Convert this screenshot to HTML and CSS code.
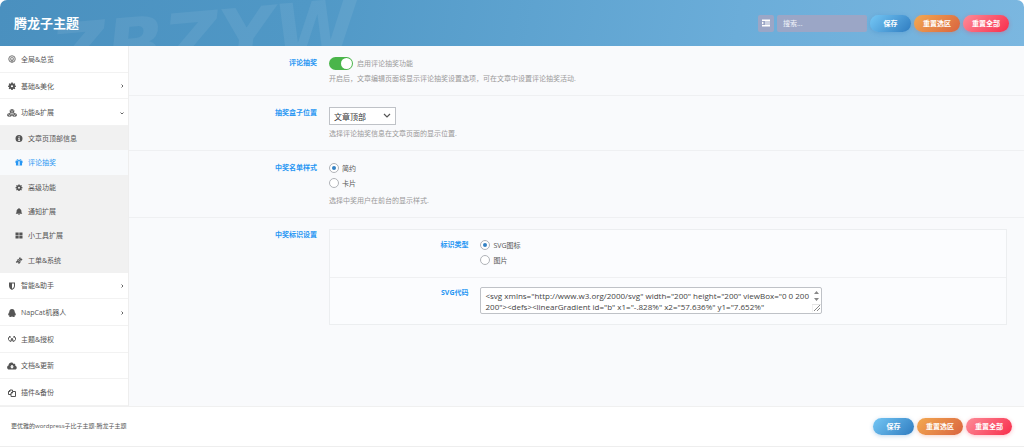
FILE: index.html
```html
<!DOCTYPE html>
<html lang="zh-CN">
<head>
<meta charset="utf-8">
<meta name="viewport" content="width=device-width, initial-scale=1">
<title>腾龙子主题</title>
<link rel="stylesheet" href="styles.css">
</head>
<body>
<header class="header">
  <span class="watermark" aria-hidden="true">ZBZYW</span>
  <h1 class="title">腾龙子主题</h1>
  <div class="tools">
    <button class="expand" type="button" aria-label="展开全部"><svg viewBox="0 0 16 16"><path d="M0 1h16v3H0zM6 5h10v2H6zM6 9h10v2H6zM0 12h16v3H0zM0 5l4 3-4 3z"/></svg></button>
    <input class="search" type="text" placeholder="搜索..." aria-label="搜索">
    <div class="actions">
      <button class="btn save" type="button">保存</button>
      <button class="btn reset" type="button">重置选区</button>
      <button class="btn reset-all" type="button">重置全部</button>
    </div>
  </div>
</header>
<div class="body">
  <nav class="sidebar">
    <a class="item" href="#"><svg class="icon soft" viewBox="0 0 16 16"><circle cx="8" cy="8" r="6.5" fill="none" stroke="currentColor" stroke-width="2"/><circle cx="8" cy="8" r="3.5" fill="none" stroke="currentColor" stroke-width="1.5"/><path d="M7 7h2v8H7z"/></svg>全局&amp;总览</a>
    <a class="item" href="#"><svg class="icon" viewBox="0 0 16 16"><path fill-rule="evenodd" d="M6.500 1h3l.4 2 1.300.500 1.700-1.100 1.700 1.700-1.100 1.700.500 1.300 2 .400v2l-2 .400-.500 1.300 1.100 1.700-1.700 1.700-1.700-1.100-1.300.500-.400 2h-3l-.400-2-1.300-.500-1.700 1.100-1.700-1.700 1.100-1.700-.500-1.300-2-.400v-2l2-.400.500-1.300-1.100-1.700 1.700-1.700 1.700 1.100 1.300-.500zM8 6.300a2.200 2.200 0 1 0 0 4.400 2.200 2.200 0 0 0 0-4.400z"/></svg>基础&amp;美化<svg class="chevron" viewBox="0 0 8 8"><path d="M3 1l3 3-3 3"/></svg></a>
    <a class="item" href="#"><svg class="icon wide" viewBox="0 0 20 16"><path d="M10 0l4.500 2v5L10 9 5.500 7V2zM5 8l4.500 2v4L5 16 .500 14v-4zM15 8l4.500 2v4L15 16l-4.500-2v-4z"/><path class="cut" d="M6.500 3L10 4.500 13.500 3M10 4.500V8M1.500 10.800L5 12.300l3.500-1.500M5 12.300v3M11.500 10.800l3.500 1.500 3.500-1.500M15 12.300v3"/></svg>功能&amp;扩展<svg class="chevron" viewBox="0 0 8 8"><path d="M1 3l3 3 3-3"/></svg></a>
    <a class="item sub" href="#"><svg class="icon" viewBox="0 0 16 16"><path fill-rule="evenodd" d="M8 0a8 8 0 1 1 0 16A8 8 0 0 1 8 0zM7 3v2.500h2.500V3zM6 7v1.500h1V12H6v1.500h4.500V12h-1V7z"/></svg>文章页顶部信息</a>
    <a class="item sub active" href="#" aria-current="page"><svg class="icon" viewBox="0 0 16 16"><path fill-rule="evenodd" d="M0 4h3C1 1 5-1 8 3c3-4 7-2 5 1h3v5h-1v6H1V9H0zM4 3.500h3C5 1.500 3.500 2 4 3.500zm5 0h3c.5-1.500-1-2-3 0zM6.500 5v9h3V5z"/></svg>评论抽奖</a>
    <a class="item sub" href="#"><svg class="icon" viewBox="0 0 16 16"><path fill-rule="evenodd" d="M6.500 1h3l.4 2 1.300.500 1.700-1.100 1.700 1.700-1.100 1.700.500 1.300 2 .400v2l-2 .400-.500 1.300 1.100 1.700-1.700 1.700-1.700-1.100-1.300.500-.400 2h-3l-.400-2-1.300-.500-1.700 1.100-1.700-1.700 1.100-1.700-.500-1.300-2-.400v-2l2-.400.500-1.300-1.100-1.700 1.700-1.700 1.700 1.100 1.300-.500zM8 6.300a2.200 2.200 0 1 0 0 4.400 2.200 2.200 0 0 0 0-4.400z"/></svg>高级功能</a>
    <a class="item sub" href="#"><svg class="icon" viewBox="0 0 16 16"><path d="M7 0h2v1.500c3 .5 4.500 3 4.500 5.500 0 3 .5 4.500 2 6H.5c1.500-1.500 2-3 2-6C2.500 4.500 4 2 7 1.500zM6 14h4c0 3-4 3-4 0z"/></svg>通知扩展</a>
    <a class="item sub" href="#"><svg class="icon" viewBox="0 0 16 16"><path d="M0 1h7.300v6.300H0zM8.700 1H16v6.300H8.700zM0 8.700h7.300V15H0zM8.700 8.700H16V15H8.700z"/></svg>小工具扩展</a>
    <a class="item sub" href="#"><svg class="icon" viewBox="0 0 16 16"><path d="M10 0l2 2-.5 2 2.500-.5 2 2-3 3-2 1 1 2-4 4.500-2-2 .5-2L4 12.500l-1 1-2.500-2 3-3 1-1L3 6l4-1z"/><path class="cut" d="M6 9l4-4M8 11l4-4"/></svg>工单&amp;系统</a>
    <a class="item" href="#"><svg class="icon" viewBox="0 0 16 16"><path fill-rule="evenodd" d="M2 1h12v7c0 4-3 6.500-6 8-3-1.500-6-4-6-8zM8 3v10.500c2.500-1.500 4-3 4-5.500V3z"/></svg>智能&amp;助手<svg class="chevron" viewBox="0 0 8 8"><path d="M3 1l3 3-3 3"/></svg></a>
    <a class="item" href="#"><svg class="icon" viewBox="0 0 16 16"><path d="M8 0c4 0 5.500 3 5.500 6.500C15 8 16 11 15.500 13c-.5.500-1-.5-1.500-1 0 1-.5 1.500-1 2 2 2-3 2.500-5 1-2 1.500-7 1-5-1-.5-.5-1-1-1-2-.5.500-1 1.500-1.500 1C0 11 1 8 2.500 6.500 2.500 3 4 0 8 0z"/></svg>NapCat机器人<svg class="chevron" viewBox="0 0 8 8"><path d="M3 1l3 3-3 3"/></svg></a>
    <a class="item" href="#"><svg class="icon line" viewBox="0 0 16 16"><path d="M4 2L1 6v3l3 4 2-1 1-5M12 2l3 4v3l-3 4-2-1-1-5M8 6v7M4 2v4M12 2v4"/></svg>主题&amp;授权</a>
    <a class="item" href="#"><svg class="icon wide" viewBox="0 0 20 16"><path fill-rule="evenodd" d="M5 15C-1 15-1 8 3 7 3 1 11-1 13 4c3-1 4 1 3.500 3.500C21 9 20 15 16 15zM8.500 6v3H6l4 4.500L14 9h-2.500V6z"/></svg>文档&amp;更新</a>
    <a class="item" href="#"><svg class="icon line" viewBox="0 0 16 16"><path d="M6 11H1V5l3-3h5v3M4 2v3H1M6 15V8l3-3h6v10zM9 5v3H6"/></svg>插件&amp;备份</a>
  </nav>
  <main class="content">
    <section class="field">
      <h2 class="label">评论抽奖</h2>
      <div class="control">
        <label class="switch"><input type="checkbox" role="switch" checked>启用评论抽奖功能</label>
        <p class="desc">开启后，文章编辑页面将显示评论抽奖设置选项，可在文章中设置评论抽奖活动.</p>
      </div>
    </section>
    <section class="field">
      <h2 class="label"><label for="position">抽奖盒子位置</label></h2>
      <div class="control">
        <select class="select" id="position"><option>文章顶部</option></select>
        <p class="desc">选择评论抽奖信息在文章页面的显示位置.</p>
      </div>
    </section>
    <section class="field">
      <h2 class="label">中奖名单样式</h2>
      <div class="control">
        <div class="radios">
          <label class="radio"><input type="radio" name="list" checked>简约</label>
          <label class="radio"><input type="radio" name="list">卡片</label>
        </div>
        <p class="desc">选择中奖用户在前台的显示样式.</p>
      </div>
    </section>
    <section class="field">
      <h2 class="label">中奖标识设置</h2>
      <div class="control">
        <div class="group">
          <div class="field">
            <h3 class="label">标识类型</h3>
            <div class="control radios">
              <label class="radio"><input type="radio" name="mark" checked>SVG图标</label>
              <label class="radio"><input type="radio" name="mark">图片</label>
            </div>
          </div>
          <div class="field">
            <h3 class="label"><label for="code">SVG代码</label></h3>
            <div class="control">
              <div class="code">
                <textarea id="code" rows="2">&lt;svg xmlns="http://www.w3.org/2000/svg" width="200" height="200" viewBox="0 0 200 200"&gt;&lt;defs&gt;&lt;linearGradient id="b" x1="-.828%" x2="57.636%" y1="7.652%"</textarea>
                <svg class="scroll" viewBox="0 0 9 24" aria-hidden="true"><path d="M2 6l2.500-3L7 6zM2 10h5l-2.500 3z"/><path class="frame" d="M0 24v-7.500h9"/><path class="grip" d="M2 23l6-6M5 23l3-3"/></svg>
              </div>
            </div>
          </div>
        </div>
      </div>
    </section>
  </main>
</div>
<footer class="footer">
  <p class="credit">更优雅的wordpress子比子主题-腾龙子主题</p>
  <div class="actions">
    <button class="btn save" type="button">保存</button>
    <button class="btn reset" type="button">重置选区</button>
    <button class="btn reset-all" type="button">重置全部</button>
  </div>
</footer>
</body>
</html>
```

FILE: styles.css
```css
* { box-sizing: border-box; }

body {
  margin: 0;
  min-height: 100vh;
  display: flex;
  flex-direction: column;
  background: #fff;
  color: #555;
  font: 7px/11px "Open Sans", "Noto Sans CJK SC", sans-serif;
}

h1, h2, h3, p { margin: 0; }
button, input, select, textarea { font: inherit; }

/* Header */
.header {
  position: relative;
  overflow: hidden;
  display: flex;
  align-items: center;
  justify-content: space-between;
  min-height: 46px;
  padding: 0 15px 0 14px;
  border-radius: 7px 7px 0 0;
  background: linear-gradient(100deg, #4a90bf, #5098c6 30%, #6badd9 72%, #7bb7e0);
}
.watermark {
  position: absolute;
  left: 51px;
  top: 2px;
  color: rgba(255, 255, 255, .07);
  font: italic bold 76px/76px "DejaVu Sans", sans-serif;
  transform: rotate(-5deg);
}
.title {
  position: relative;
  color: #fff;
  font-size: 13px;
  line-height: 20px;
}
.tools, .actions { display: flex; gap: 3px; }
.expand {
  display: grid;
  place-items: center;
  width: 16px;
  padding: 0;
  border: 0;
  border-radius: 2px;
  background: #9ba6c6;
}
.expand svg { width: 8px; height: 8px; fill: #fff; }
.search {
  width: 90px;
  height: 17px;
  padding: 0 6px;
  border: 0;
  border-radius: 2px;
  background: #9ba6c6;
  color: #fff;
}
.search::placeholder { color: #f0f3fa; }
.btn {
  min-width: 41px;
  height: 17px;
  padding: 0 9px;
  border: 0;
  border-radius: 9px;
  color: #fff;
  font-weight: bold;
  white-space: nowrap;
}
.save { background: linear-gradient(135deg, #74c7f5, #2f7cc0); box-shadow: 0 1px 4px rgba(47, 124, 192, .3); }
.reset { background: linear-gradient(135deg, #f3a950, #d9643f); box-shadow: 0 1px 4px rgba(217, 100, 63, .3); }
.reset-all { background: linear-gradient(135deg, #fd8c98, #f82d4b); box-shadow: 0 1px 4px rgba(248, 45, 75, .3); }

/* Navigation */
.body { flex: 1; display: flex; }
.sidebar {
  flex: 0 0 129px;
  display: flex;
  flex-direction: column;
  border-right: 1px solid #eee;
}
.item {
  flex: 12 1 0;
  display: flex;
  align-items: center;
  gap: 5px;
  padding: 0 4px 0 8px;
  box-shadow: inset 0 -1px #f2f2f2;
  color: #555;
  text-decoration: none;
}
.item.sub {
  flex-grow: 11;
  padding-left: 15px;
  background: #f1f1f1;
  box-shadow: none;
}
.item.active { background: #f8fafc; color: #2796f3; }
.icon { width: 8px; height: 8px; fill: currentColor; }
.sub .icon { height: 7px; }
.soft { opacity: .8; }
.wide { width: 10px; margin: 0 -1px; }
.line { fill: none; stroke: currentColor; stroke-width: 2; }
.cut { fill: none; stroke: #fff; stroke-width: 1; }
.chevron {
  width: 4px;
  height: 4px;
  margin-left: auto;
  fill: none;
  stroke: #666;
  stroke-width: 2;
}

/* Settings */
.content { flex: 1; min-width: 0; background: #f9fafc; }
.field {
  display: flex;
  gap: 12px;
  padding: 11px 17px 11px 0;
  border-bottom: 1px solid #eff0f2;
}
.content > .field:last-child, .group .field:last-child { border-bottom: 0; }
.label {
  flex: 0 0 21.4%;
  color: #2796f3;
  font-size: 7px;
  line-height: 11px;
  text-align: right;
}
.control { flex: 1; min-width: 0; }
.desc { margin-top: 3px; color: #999; }
.switch {
  display: flex;
  align-items: center;
  gap: 4px;
  color: #999;
}
.switch input {
  appearance: none;
  display: flex;
  justify-content: flex-end;
  width: 24px;
  height: 13px;
  margin: 0;
  padding: 1px;
  border-radius: 7px;
  background: #4ab54a;
}
.switch input::before {
  content: "";
  width: 11px;
  height: 11px;
  border-radius: 50%;
  background: #fff;
}
.select {
  display: block;
  appearance: none;
  width: 67px;
  height: 18px;
  padding: 0 4px;
  border: 1px solid #bfc2c7;
  border-radius: 0;
  background: #fff url("data:image/svg+xml,%3Csvg xmlns='http://www.w3.org/2000/svg' viewBox='0 0 8 8'%3E%3Cpath d='M1 2l3 3 3-3' fill='none' stroke='%23555' stroke-width='1.2'/%3E%3C/svg%3E") no-repeat right 4px center / 8px 8px;
  color: #333;
  font-size: 8px;
}
.radios {
  display: flex;
  flex-direction: column;
  gap: 5px;
  padding-top: 1px;
}
.radios + .desc { margin-top: 7px; }
.radio {
  display: flex;
  align-items: center;
  gap: 3px;
  height: 10px;
}
.radio input {
  appearance: none;
  display: grid;
  place-items: center;
  width: 10px;
  height: 10px;
  margin: 0;
  border: 1px solid #b0b3b8;
  border-radius: 50%;
  background: #fff;
}
.radio input:checked::before {
  content: "";
  width: 4px;
  height: 4px;
  border-radius: 50%;
  background: #3582c4;
}
.group { border: 1px solid #eceef0; background: #fbfcfe; }
.group .field { padding: 9px 0 12px; }
.group .field:last-child { padding-bottom: 10px; }
.group .label { flex-basis: 20.5%; }
.code {
  position: relative;
  max-width: 342px;
}
.code textarea {
  display: block;
  width: 100%;
  height: 27px;
  padding: 2px 12px 2px 4px;
  overflow: hidden;
  resize: none;
  border: 1px solid #bfc2c7;
  border-radius: 2px;
  background: #fff;
  color: #444;
  font-size: 8px;
  line-height: 11px;
}
.scroll {
  position: absolute;
  right: 1px;
  top: 1px;
  width: 9px;
  height: 24px;
  fill: #888;
}
.grip { fill: none; stroke: #888; stroke-width: 1; }
.frame { fill: none; stroke: #e4e4e4; stroke-width: 1; }

/* Footer */
.footer {
  display: flex;
  align-items: center;
  justify-content: space-between;
  min-height: 41px;
  padding: 0 12px 0 11px;
  border-top: 1px solid #f0f0f0;
  border-bottom: 1px solid #eee;
}
.credit { font-size: 6px; }
```
